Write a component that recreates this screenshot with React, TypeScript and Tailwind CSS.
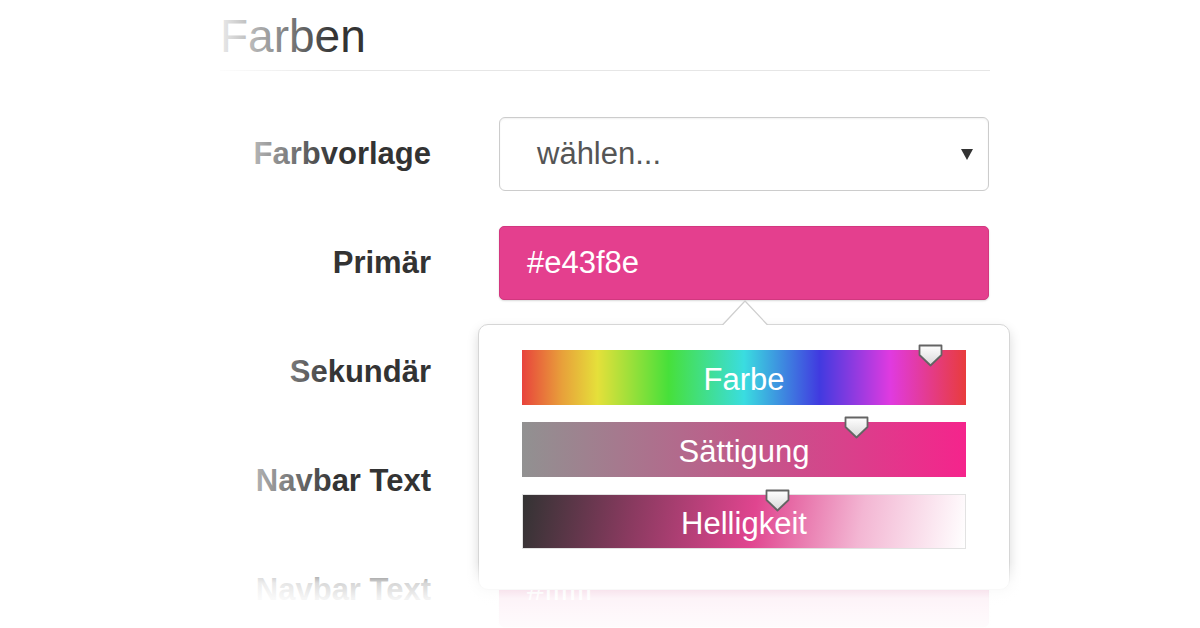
import React from "react";

type Bar = {
  label: string;
  bg: string;
  handle: string;
  extra?: string;
};

const bars: Bar[] = [
  {
    label: "Farbe",
    bg: "bg-[linear-gradient(to_right,#e8433c,#e8a03a_9%,#e5e03a_17%,#47e03a_33%,#3adde0_50%,#413ae0_67%,#e03ae0_83%,#e83c3c)]",
    handle: "left-[396px]",
  },
  {
    label: "Sättigung",
    bg: "bg-[linear-gradient(to_right,#919191,#c05a8a_50%,#f5248c)]",
    handle: "left-[322px]",
  },
  {
    label: "Helligkeit",
    bg: "bg-[linear-gradient(100deg,#333333,#8a3a60_25%,#e0458f_52%,#f3b6d3_76%,#ffffff)]",
    handle: "left-[242px]",
    extra: "border border-[#e2e2e2]",
  },
];

function Handle({ pos }: { pos: string }) {
  return (
    <svg
      className={`absolute top-[-6px] ${pos} w-[25px] h-[23px]`}
      viewBox="0 0 25 23"
    >
      <defs>
        <linearGradient id="hg" x1="0" y1="0" x2="0" y2="1">
          <stop offset="0" stopColor="#ffffff" />
          <stop offset="1" stopColor="#d8d8d8" />
        </linearGradient>
      </defs>
      <path
        d="M1.5 1.5 H23.5 V11 L12.5 21.5 L1.5 11 Z"
        fill="url(#hg)"
        stroke="#646464"
        strokeWidth="1.8"
        strokeLinejoin="round"
      />
    </svg>
  );
}

function Popover() {
  return (
    <div className="absolute left-[-22px] top-[97px] z-10 w-[532px] h-[266px] bg-white border border-[#d6d6d6] rounded-[10px] shadow-[0_5px_12px_rgba(0,0,0,0.15)] px-[43px] pt-[25px]">
      <svg
        className="absolute top-[-25px] left-[243px] w-[46px] h-[26px]"
        viewBox="0 0 46 26"
      >
        <path d="M0 25.5 L23 1 L46 25.5" fill="#ffffff" stroke="#cfcfcf" strokeWidth="1.2" />
        <rect x="0" y="25" width="46" height="1" fill="#ffffff" />
      </svg>
      <div className="flex flex-col gap-[17px]">
        {bars.map((b) => (
          <div
            key={b.label}
            className={`relative h-[55px] w-[444px] ${b.bg} ${b.extra ?? ""} flex items-center justify-center pt-[6px] text-white text-[31px]`}
          >
            <span>{b.label}</span>
            <Handle pos={b.handle} />
          </div>
        ))}
      </div>
    </div>
  );
}

function Row({ label, children }: { label: React.ReactNode; children: React.ReactNode }) {
  return (
    <div className="grid grid-cols-[211px_490px] gap-x-[68px] items-center h-[74px]">
      <div className="text-right font-bold text-[31px] text-[#333]">{label}</div>
      {children}
    </div>
  );
}

function ColorInput({ value, children }: { value: string; children?: React.ReactNode }) {
  return (
    <div className="relative h-[74px] rounded-[5px] bg-[#e43f8e] border border-[#d2377f] shadow-[0_1px_2px_rgba(0,0,0,0.15)] pl-[27px] flex items-center text-white text-[31px]">
      {value}
      {children}
    </div>
  );
}

export default function App() {
  return (
    <div className="relative w-[1200px] h-[628px] overflow-hidden bg-white font-['Liberation_Sans',Arial,sans-serif]">
      <div className="ml-[220px] w-[770px]">
        <h2 className="pt-[13px] pb-[11px] text-[46px] leading-none text-[#333] border-b border-[#e6e6e6]">
          Farben
        </h2>
        <div className="mt-[46px] flex flex-col gap-[35px]">
          <Row label="Farbvorlage">
            <div className="h-[74px] rounded-[6px] border border-[#cccccc] bg-white shadow-[inset_0_1px_2px_rgba(0,0,0,0.06)] pl-[37px] pr-[15px] flex items-center justify-between text-[31px] text-[#555]">
              <span>wählen...</span>
              <svg className="w-[12px] h-[11px]" viewBox="0 0 12 11">
                <path d="M0 0 H12 L6 11 Z" fill="#333" />
              </svg>
            </div>
          </Row>
          <Row label="Primär">
            <ColorInput value="#e43f8e">
              <Popover />
            </ColorInput>
          </Row>
          <Row label="Sekundär">
            <ColorInput value="#3f8ee4" />
          </Row>
          <Row label="Navbar Text">
            <ColorInput value="#ffffff" />
          </Row>
          <Row label="Navbar Text">
            <ColorInput value="#ffffff" />
          </Row>
        </div>
      </div>

      <div className="pointer-events-none absolute inset-y-0 left-0 w-[340px] z-20 bg-[linear-gradient(to_right,#ffffff_208px,rgba(255,255,255,0)_335px)]" />
      <div className="pointer-events-none absolute inset-x-0 bottom-0 h-[66px] z-20 bg-[linear-gradient(to_bottom,rgba(255,255,255,0)_0,rgba(255,255,255,0.8)_32%,rgba(255,255,255,0.94)_55%,rgba(255,255,255,0.98)_100%)]" />
    </div>
  );
}
